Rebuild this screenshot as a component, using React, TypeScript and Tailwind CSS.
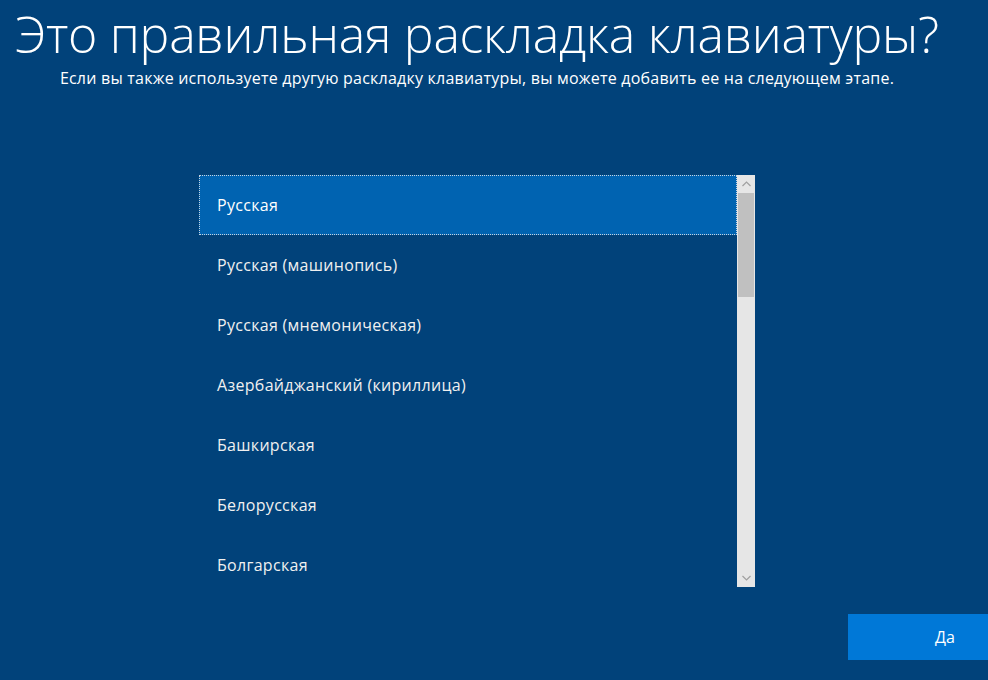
import React from 'react';

const layouts = [
  'Русская',
  'Русская (машинопись)',
  'Русская (мнемоническая)',
  'Азербайджанский (кириллица)',
  'Башкирская',
  'Белорусская',
  'Болгарская',
];

const font = { fontFamily: '"Open Sans", "Noto Sans", sans-serif' };

const App: React.FC = () => {
  return (
    <div
      className="w-[988px] h-[680px] overflow-hidden bg-[#01427a] text-white flex flex-col"
      style={font}
    >
      <div className="w-[954px] flex flex-col items-center">
        <h1 className="text-[50px] leading-[68px] font-light tracking-[-0.25px] whitespace-nowrap">
          Это правильная раскладка клавиатуры?
        </h1>
        <p className="text-[16px] leading-[20px] tracking-[0.22px] whitespace-nowrap">
          Если вы также используете другую раскладку клавиатуры, вы можете добавить ее на следующем этапе.
        </p>
      </div>

      <div className="ml-[199px] mt-[87px] flex h-[412px] w-[556px]">
        <ul className="flex-1 flex flex-col">
          {layouts.map((name, i) => (
            <li
              key={name}
              className={
                i === 0
                  ? 'h-[60px] shrink-0 flex items-center pl-[17px] text-[16px] tracking-[0.3px] bg-[#0063b1] border border-dotted border-[#c8d4e0]'
                  : 'h-[60px] shrink-0 flex items-center pl-[18px] text-[16px] tracking-[0.3px] text-[#f0f0f0]'
              }
            >
              {name}
            </li>
          ))}
        </ul>
        <div className="w-[18px] bg-[#e6e6e6] flex flex-col">
          <div className="h-[18px] flex items-center justify-center">
            <svg width="9" height="6" viewBox="0 0 9 6" fill="none">
              <path d="M0.5 5L4.5 1L8.5 5" stroke="#a0a0a0" strokeWidth="1.2" />
            </svg>
          </div>
          <div className="mx-[1px] h-[104px] bg-[#c0c0c0]" />
          <div className="flex-1" />
          <div className="h-[18px] flex items-center justify-center">
            <svg width="9" height="6" viewBox="0 0 9 6" fill="none">
              <path d="M0.5 1L4.5 5L8.5 1" stroke="#a0a0a0" strokeWidth="1.2" />
            </svg>
          </div>
        </div>
      </div>

      <button className="ml-[848px] mt-[27px] w-[194px] h-[46px] shrink-0 bg-[#0078d7] text-[16px] text-white flex items-center justify-center">
        Да
      </button>
    </div>
  );
};

export default App;
